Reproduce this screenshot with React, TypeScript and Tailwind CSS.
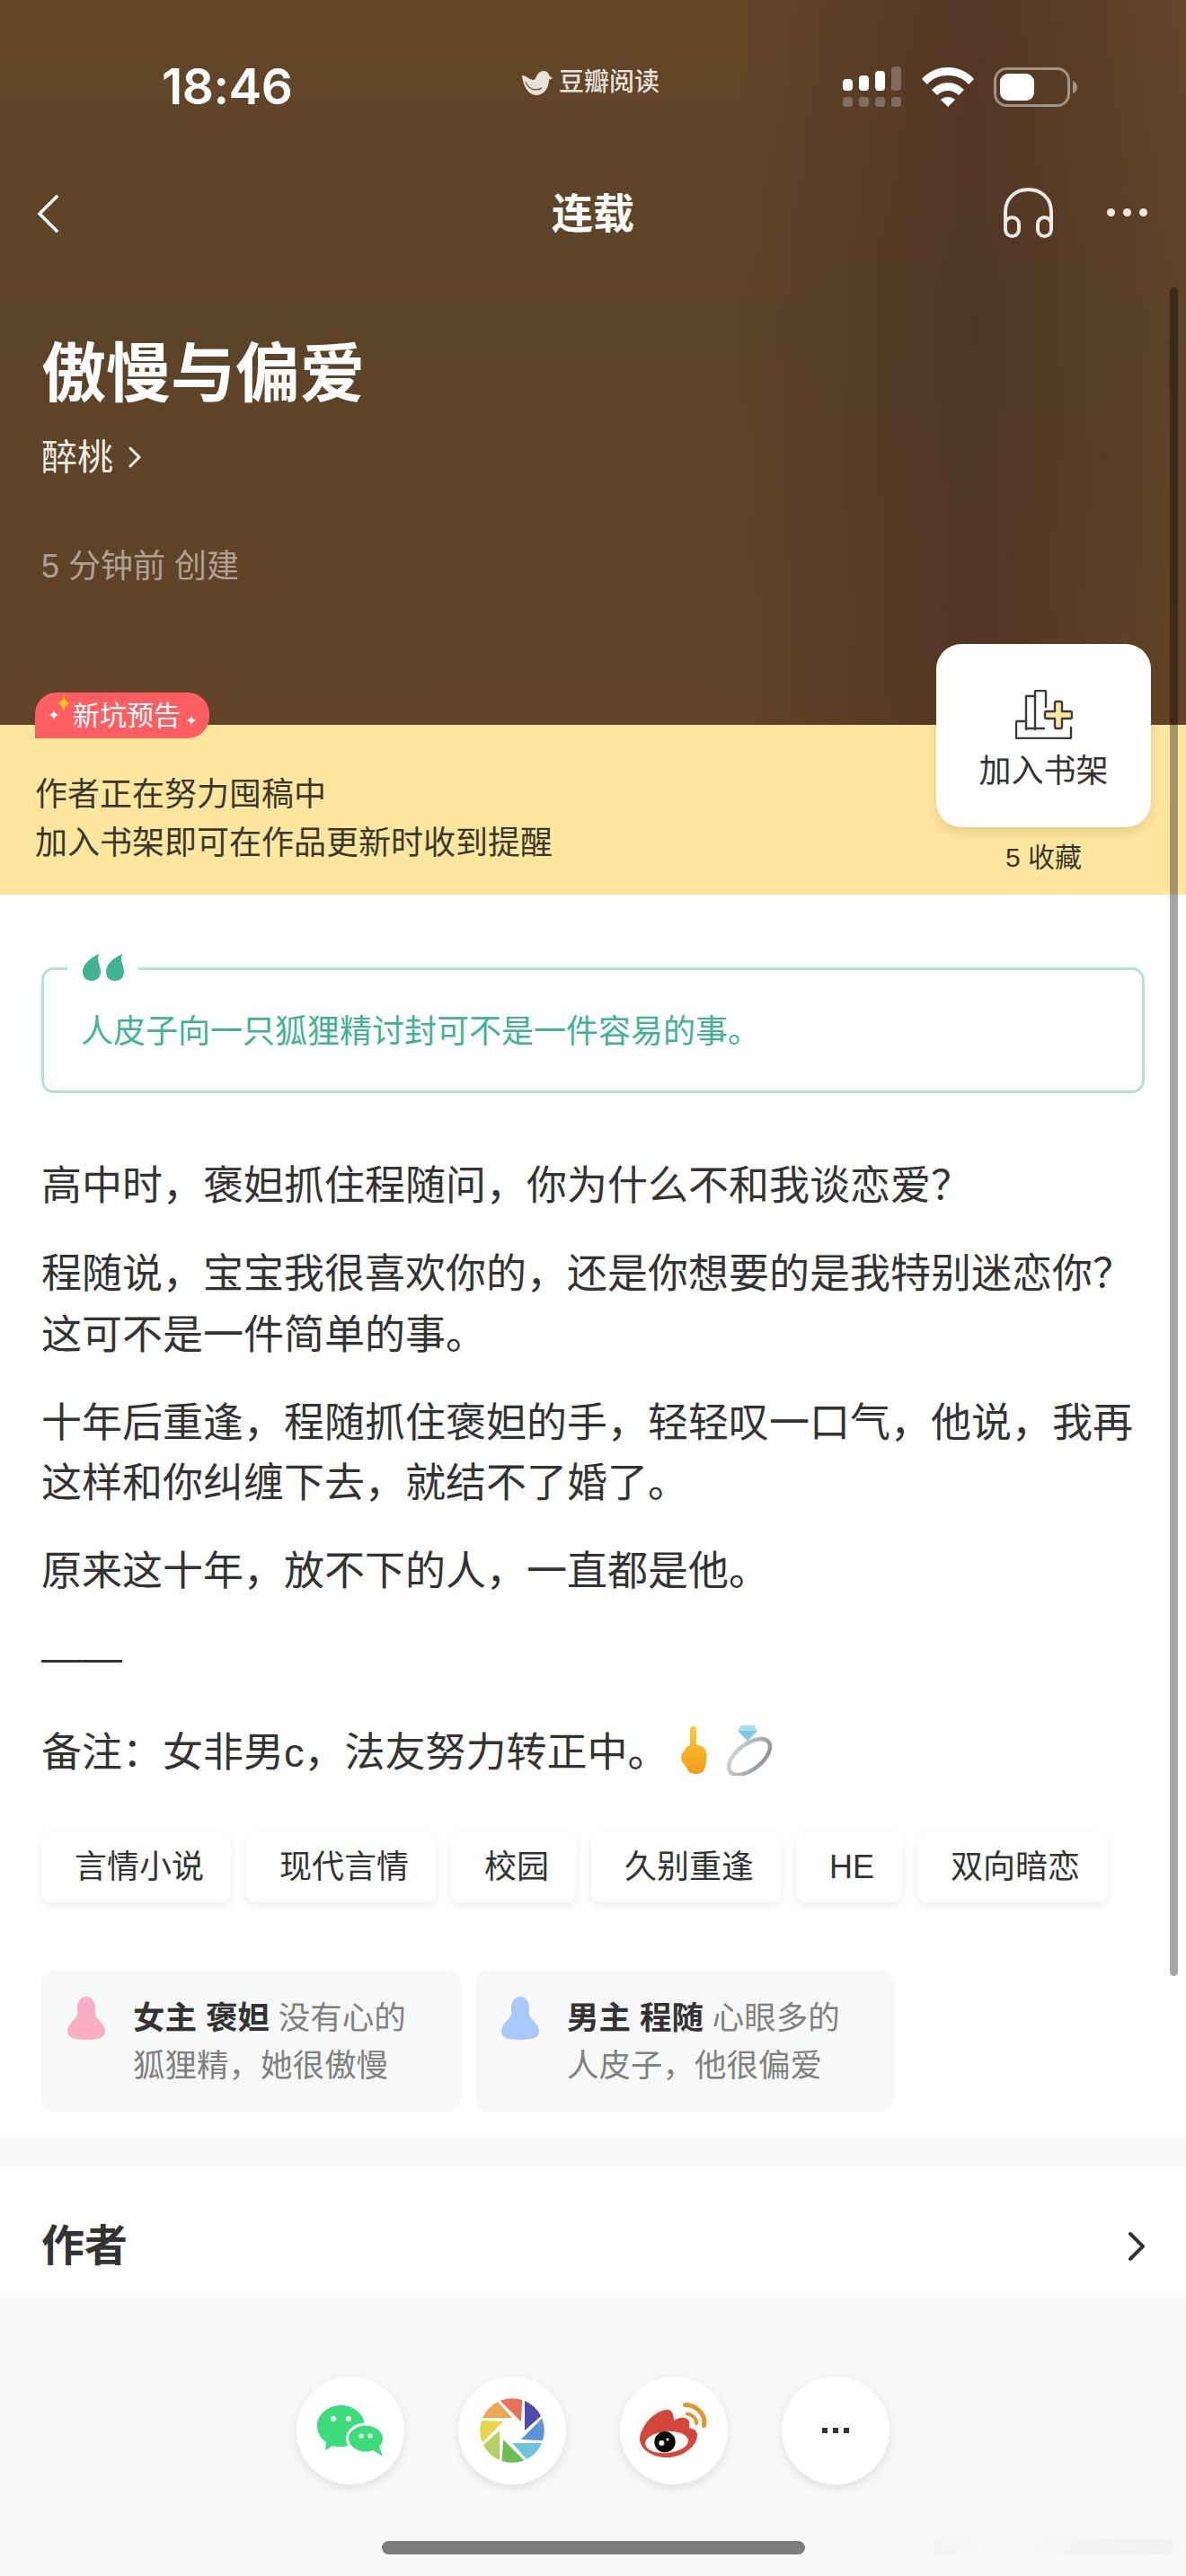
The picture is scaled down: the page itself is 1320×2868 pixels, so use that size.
const tags = ["言情小说", "现代言情", "校园", "久别重逢", "HE", "双向暗恋"];

const sans = "font-['Liberation_Sans','Noto_Sans_CJK_SC',sans-serif]";

const shareCircle = "flex h-[120px] w-[120px] items-center justify-center rounded-full bg-white shadow-[0_4px_12px_rgba(0,0,0,0.1)]";

const blades = ["#4f4da8", "#5b95d7", "#6ec2da", "#6dbd55", "#b4d063", "#e9d54c", "#e9a855", "#ea7159"];

function StatusIcons() {
  return (
    <div className="flex items-center">
      <svg width="65" height="45" viewBox="0 0 65 45" fill="#fff">
        <rect x="0" y="14" width="11" height="13" rx="4" />
        <rect x="18" y="10" width="11" height="17" rx="4" />
        <rect x="36" y="5" width="11" height="22" rx="4" />
        <rect x="54" y="0" width="11" height="27" rx="4" fillOpacity="0.25" />
        <rect x="0" y="34" width="11" height="11" rx="3.5" fillOpacity="0.25" />
        <rect x="18" y="34" width="11" height="11" rx="3.5" fillOpacity="0.25" />
        <rect x="36" y="34" width="11" height="11" rx="3.5" fillOpacity="0.25" />
        <rect x="54" y="34" width="11" height="11" rx="3.5" fillOpacity="0.25" />
      </svg>
      <svg className="ml-[23px]" width="58" height="44" viewBox="0 0 58 44" fill="#fff">
        <path d="M29 0C40 0 50 4 58 13L52 19C46 12 38 9 29 9C20 9 12 12 6 19L0 13C8 4 18 0 29 0Z" />
        <path d="M29 17C36 17 42 20 47 25L41 31C38 28 34 26 29 26C24 26 20 28 17 31L11 25C16 20 22 17 29 17Z" />
        <path d="M29 33C32 33 35 34 37 36L29 44L21 36C23 34 26 33 29 33Z" />
      </svg>
      <svg className="ml-[22px]" width="93" height="44" viewBox="0 0 93 44" fill="none">
        <rect x="1.5" y="1.5" width="82" height="41" rx="13" stroke="#fff" strokeOpacity="0.45" strokeWidth="3" />
        <rect x="7" y="7" width="38" height="30" rx="9" fill="#fff" />
        <path d="M88 15C91 16 93 19 93 22C93 25 91 28 88 29Z" fill="#fff" fillOpacity="0.45" />
      </svg>
    </div>
  );
}

function BirdLogo() {
  return (
    <svg width="34" height="28" viewBox="0 0 34 28">
      <path d="M0 6C5 6 8 11 13 11C16 11 16 1 24 1C28 1 30 4 30 6L34 9L30 11C30 20 24 28 16 28C7 28 1 17 0 6Z" fill="#e8e2da" />
      <path d="M4 13C7 21 14 24 22 20" stroke="#77654f" strokeWidth="1.4" fill="none" />
    </svg>
  );
}

function ShelfIcon() {
  return (
    <svg width="64" height="55" viewBox="0 0 64 55" fill="none" stroke="#3b3b3b" strokeWidth="2.4" strokeLinecap="round" strokeLinejoin="round">
      <path d="M10 35H2C1 35 1 36 1 37V53C1 54 1 54 2 54H61C62 54 62 54 62 53V42" />
      <path d="M12 44V7H22" />
      <path d="M22 44V2C22 1 22 1 23 1H33C34 1 34 1 34 2V19" />
      <path d="M12 43H32" />
      <path d="M44 15C44 14 44 13 46 13H50C52 13 52 14 52 15V24H61C62 24 63 25 63 26V30C63 32 62 32 61 32H52V41C52 42 52 43 50 43H46C44 43 44 42 44 41V32H35C33 32 33 31 33 30V26C33 25 33 24 35 24H44Z" fill="#ffe69e" />
    </svg>
  );
}

function Person({ color }: { color: string }) {
  return (
    <svg className="mt-[30px] ml-[29px] shrink-0" width="42" height="48" viewBox="0 0 42 48" fill={color}>
      <path d="M21 0C27.5 0 31 6 31 13C31 18 30 20 33 24C38 29 42 33 42 39C42 46 33 48 21 48C9 48 0 46 0 39C0 33 4 29 9 24C12 20 11 18 11 13C11 6 14.5 0 21 0Z" />
    </svg>
  );
}

function WeChat() {
  return (
    <svg width="74" height="57" viewBox="0 0 74 57">
      <path d="M26.5 0C41 0 53 10 53 23C53 36 41 46 26.5 46C23 46 20 46 17 45L9 50L10 41C4 37 0 30 0 23C0 10 12 0 26.5 0Z" fill="#3ddc7b" />
      <ellipse cx="54" cy="37" rx="22" ry="17.5" fill="#fff" />
      <path d="M54 22.5C64 22.5 73 29 73 37C73 41 71 44 69 46L73 57L62 50C59 51 57 51.5 54 51.5C44 51.5 35 45 35 37C35 29 44 22.5 54 22.5Z" fill="#3ddc7b" />
      <circle cx="18" cy="15" r="3" fill="#fff" />
      <circle cx="35" cy="15" r="3" fill="#fff" />
      <circle cx="49" cy="34" r="2.6" fill="#fff" />
      <circle cx="59" cy="34" r="2.6" fill="#fff" />
    </svg>
  );
}

function Aperture() {
  return (
    <svg width="72" height="72" viewBox="-36 -36 72 72">
      {blades.map((color, i) => (
        <path key={color} d="M14 -33A36 36 0 0 1 32 -16L14 0Z" fill={color} transform={`rotate(${i * 45})`} />
      ))}
    </svg>
  );
}

function Weibo() {
  return (
    <svg width="76" height="62" viewBox="0 0 76 62">
      <path d="M0 40C1 28 14 10 29 8C35 7 38 12 38 20C42 17 50 15 54 19C56 22 55 25 55 28C60 29 64 31 64 36C64 50 46 61 30 61C14 61 0 52 0 40Z" fill="#d4453a" />
      <ellipse cx="30" cy="44" rx="24" ry="12" fill="#fff" transform="rotate(-5 30 44)" />
      <circle cx="28" cy="43.7" r="11.7" fill="#050505" />
      <circle cx="24.3" cy="45" r="3" fill="#fff" />
      <circle cx="31" cy="41" r="1.6" fill="#fff" />
      <path d="M50.5 2.5C62 2.5 74 12 71.5 25.5" stroke="#e59332" strokeWidth="5" strokeLinecap="round" fill="none" />
      <path d="M53 12.5C58 13 64 18 63 23" stroke="#e59332" strokeWidth="4" strokeLinecap="round" fill="none" />
    </svg>
  );
}

function Emojis() {
  return (
    <span className="ml-[14px] inline-flex items-center gap-[21px] align-[-9px]">
      <svg width="29" height="54" viewBox="0 0 29 54">
        <defs>
          <linearGradient id="fist" x1="0" y1="0" x2="0" y2="1">
            <stop offset="0" stopColor="#fcc935" />
            <stop offset="1" stopColor="#f09c1b" />
          </linearGradient>
        </defs>
        <path d="M10 3C10 -1 17 -1 17 3V21C22 21 27 23 28 29C29 36 28 44 25 50C21 54 12 54 8 50C7 46 4 44 1 39C-1 34 1 29 4 27C5 24 7 22 10 21Z" fill="url(#fist)" />
      </svg>
      <svg width="52" height="56" viewBox="0 0 52 56" fill="none">
        <defs>
          <linearGradient id="band" x1="0" y1="0" x2="1" y2="1">
            <stop offset="0" stopColor="#d6dadd" />
            <stop offset="1" stopColor="#868c92" />
          </linearGradient>
        </defs>
        <ellipse cx="26" cy="35" rx="27" ry="14" transform="rotate(-38 26 35)" stroke="url(#band)" strokeWidth="4.5" />
        <path d="M17 0H31L35 6L24 17L13 6Z" fill="#a5e0f5" />
        <path d="M13 6H35L24 17Z" fill="#7fcbe6" />
      </svg>
    </span>
  );
}

function CharacterCard({ role, name, first, second, color }: { role: string; name: string; first: string; second: string; color: string }) {
  return (
    <div className="flex h-[159px] w-[467px] rounded-[16px] bg-[#f7f9f9]">
      <Person color={color} />
      <div className="ml-[31px] pt-[28px] text-[35.5px] leading-[53px] text-[#808080]">
        <div>
          <span className="font-bold text-[#333]">
            {role} {name}
          </span>{" "}
          {first}
        </div>
        <div>{second}</div>
      </div>
    </div>
  );
}

export default function App() {
  return (
    <div className={`${sans} relative h-[2868px] w-[1320px] overflow-hidden bg-[#f7f9f9] text-[#333]`}>
      <div className="h-[807px] bg-[linear-gradient(90deg,rgba(50,25,30,0)_62%,rgba(50,25,30,0.33)_82%,rgba(50,25,30,0)_100%),linear-gradient(180deg,#654528_0%,#5c4428_45%,#624327_100%)] text-white">
        <div className="flex h-[190px] items-center pt-[3px] pl-[180px] pr-[121px]">
          <span className="w-[143px] font-['Inter',sans-serif] text-[55px] leading-none font-semibold tracking-[-0.5px]">18:46</span>
          <div className="mb-[10px] ml-[258px] flex items-center gap-[7px] text-[28px] leading-none font-medium text-[#e8e2da]">
            <BirdLogo />
            豆瓣阅读
          </div>
          <div className="ml-auto">
            <StatusIcons />
          </div>
        </div>
        <div className="relative flex h-[96px] items-center justify-center">
          <svg className="absolute left-[40px] top-[26px]" width="26" height="44" viewBox="0 0 26 44" fill="none" stroke="#fff" strokeWidth="3.6" strokeLinecap="round" strokeLinejoin="round">
            <path d="M23 3L4 22L23 41" />
          </svg>
          <span className="text-[46px] leading-none font-bold">连载</span>
          <svg className="absolute left-[1116px] top-[19px]" width="57" height="56" viewBox="0 0 57 56" fill="none" stroke="#efe9e4" strokeWidth="4">
            <path d="M3 40V27C3 12 14 2 28.5 2C43 2 54 12 54 27V40" />
            <rect x="3" y="33" width="15" height="21" rx="7.5" />
            <rect x="39" y="33" width="15" height="21" rx="7.5" />
          </svg>
          <div className="absolute left-[1232px] top-[42px] flex gap-[9px]">
            <span className="h-[9px] w-[9px] rounded-full bg-[#efe9e4]" />
            <span className="h-[9px] w-[9px] rounded-full bg-[#efe9e4]" />
            <span className="h-[9px] w-[9px] rounded-full bg-[#efe9e4]" />
          </div>
        </div>
        <div className="pl-[46px]">
          <h1 className="mt-[86px] text-[72px] leading-[88px] font-bold">傲慢与偏爱</h1>
          <div className="mt-[21px] flex items-center gap-[17px] text-[40px] leading-[56px] text-[#f1ece7]">
            醉桃
            <svg width="14" height="26" viewBox="0 0 14 26" fill="none" stroke="#f1ece7" strokeWidth="3" strokeLinecap="round" strokeLinejoin="round">
              <path d="M2 3L12 13L2 23" />
            </svg>
          </div>
          <div className="mt-[70px] text-[36px] leading-[48px] text-[#ffffff80]">5 分钟前 创建</div>
        </div>
      </div>

      <div className="relative h-[189px] bg-[#ffe69e] pl-[39px] pt-[51px] text-[36px] leading-[54px] text-[#3a372c]">
        <div>作者正在努力囤稿中</div>
        <div>加入书架即可在作品更新时收到提醒</div>
        <div className="absolute left-[1042px] top-[-90px] w-[239px] text-center">
          <div className="flex h-[204px] flex-col items-center rounded-[28px] bg-white pt-[51px] shadow-[0_6px_14px_rgba(120,90,20,0.18)]">
            <ShelfIcon />
            <div className="mt-[11px] text-[36px] leading-[50px] text-[#333]">加入书架</div>
          </div>
          <div className="mt-[13px] text-[30px] leading-[42px]">5 收藏</div>
        </div>
        <div className="absolute left-[39px] top-[-36px] flex h-[51px] w-[194px] items-center justify-center rounded-[24px] rounded-bl-none bg-[#ff5f62] pl-[10px] text-[30px] leading-none text-white">
          <svg className="absolute left-0 top-0" width="194" height="51" viewBox="0 0 194 51">
            <path d="M32 2C33 8 34 10 39 12C34 14 33 16 32 22C31 16 30 14 25 12C30 10 31 8 32 2Z" fill="#ffc21c" />
            <path d="M21 18C21 22 22 23 26 25C22 27 21 28 21 32C21 28 20 27 16 25C20 23 21 22 21 18Z" fill="#fff" />
            <path d="M174 24C174 28 175 29 179 31C175 33 174 34 174 38C174 34 173 33 169 31C173 29 174 28 174 24Z" fill="#fff" />
          </svg>
          <span className="relative">新坑预告</span>
        </div>
      </div>

      <div className="h-[1384px] bg-white px-[46px] pt-[81px]">
        <div className="relative flex h-[140px] items-center rounded-[14px] border-[3px] border-[#b6e0d3] pl-[41px] pt-[4px] text-[36px] leading-none text-[#41b393]">
          <div className="absolute left-[26px] top-[-18px] flex h-[32px] w-[79px] justify-center bg-white">
            <svg width="46" height="30" viewBox="0 0 46 30" fill="#41b393">
              <path d="M19 0C14 5 20 12 20 20C20 26 16 30 10 30C4 30 0 26 0 20C0 11 10 3 19 0Z" />
              <path d="M45 0C40 5 46 12 46 20C46 26 42 30 36 30C30 30 26 26 26 20C26 11 36 3 45 0Z" />
            </svg>
          </div>
          人皮子向一只狐狸精讨封可不是一件容易的事。
        </div>

        <div className="mt-[70px] text-[45px] leading-[67.5px] text-[#333]">
          <p>高中时，褒妲抓住程随问，你为什么不和我谈恋爱？</p>
          <p className="mt-[30.5px]">程随说，宝宝我很喜欢你的，还是你想要的是我特别迷恋你？这可不是一件简单的事。</p>
          <p className="mt-[30.5px]">十年后重逢，程随抓住褒妲的手，轻轻叹一口气，他说，我再这样和你纠缠下去，就结不了婚了。</p>
          <p className="mt-[30.5px]">原来这十年，放不下的人，一直都是他。</p>
          <p className="mt-[28px] font-medium">——</p>
          <p className="mt-[39px]">备注：女非男c，法友努力转正中。<Emojis /></p>
        </div>

        <div className="mt-[54px] flex gap-[17px]">
          {tags.map((tag) => (
            <div key={tag} className="flex h-[78px] min-w-[118px] items-center rounded-[12px] bg-white pl-[37px] pr-[30px] text-[36px] leading-none shadow-[0_4px_12px_rgba(0,0,0,0.08)]">
              {tag}
            </div>
          ))}
        </div>

        <div className="mt-[75px] flex gap-[16px]">
          <CharacterCard role="女主" name="褒妲" first="没有心的" second="狐狸精，她很傲慢" color="#f9aec4" />
          <CharacterCard role="男主" name="程随" first="心眼多的" second="人皮子，他很偏爱" color="#a9c8fb" />
        </div>
      </div>

      <div className="mt-[32px] flex h-[144px] items-center justify-between bg-white pl-[46px] pr-[45px] pt-[34px]">
        <span className="text-[48px] leading-none font-bold">作者</span>
        <svg width="20" height="34" viewBox="0 0 20 34" fill="none" stroke="#333" strokeWidth="4" strokeLinecap="round" strokeLinejoin="round">
          <path d="M3 3L17 17L3 31" />
        </svg>
      </div>

      <div className="mt-[90px] flex justify-center gap-[60px]">
        <div className={shareCircle}>
          <WeChat />
        </div>
        <div className={shareCircle}>
          <Aperture />
        </div>
        <div className={shareCircle}>
          <Weibo />
        </div>
        <div className={`${shareCircle} gap-[6px]`}>
          <span className="h-[6px] w-[6px] bg-[#333]" />
          <span className="h-[6px] w-[6px] bg-[#333]" />
          <span className="h-[6px] w-[6px] bg-[#333]" />
        </div>
      </div>

      <div className="absolute left-[425px] top-[2829px] h-[15px] w-[471px] rounded-full bg-[#7c7e7e]" />
      <div className="absolute left-[1040px] top-[2826px] h-[18px] w-[266px] rounded-r-full bg-[linear-gradient(90deg,rgba(0,0,0,0.015),rgba(0,0,0,0)_30%,rgba(0,0,0,0.035))]" />
      <div className="absolute left-[1302px] top-[320px] h-[1880px] w-[9px] rounded-full bg-black/35" />
    </div>
  );
}
